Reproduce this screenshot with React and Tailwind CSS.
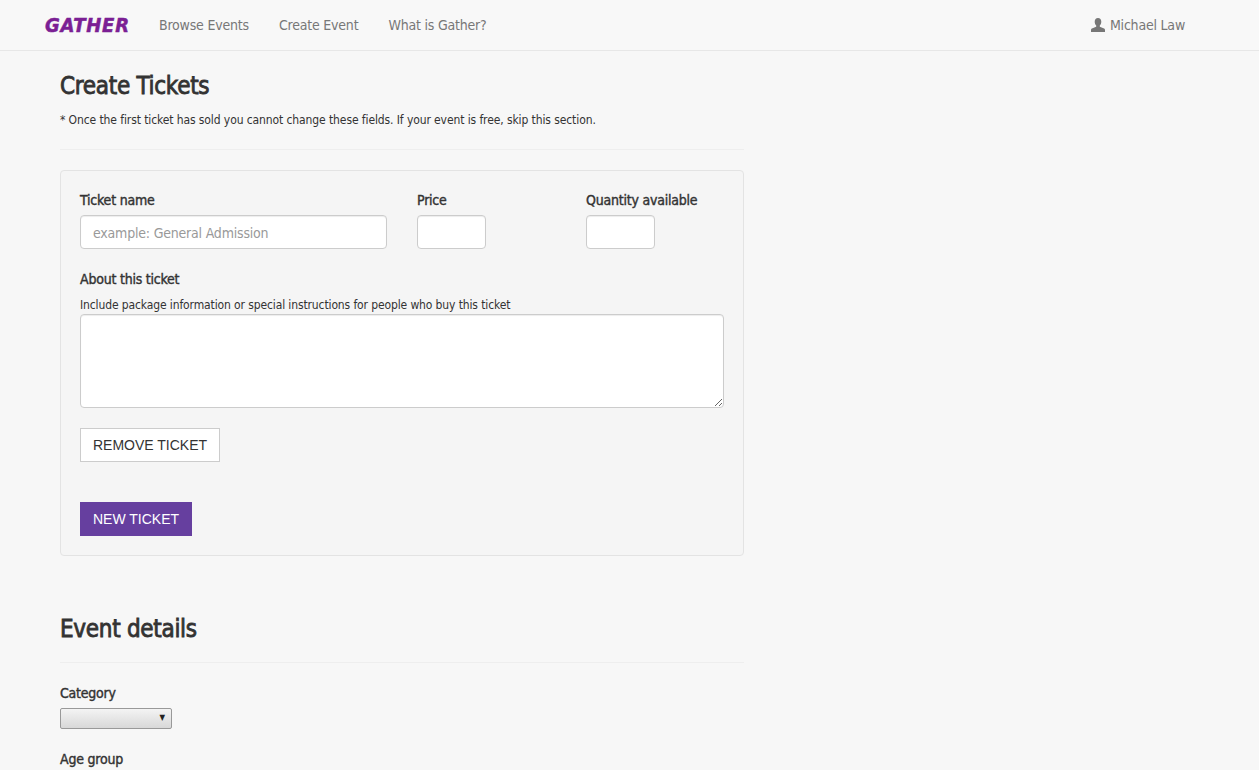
const body = "font-['DejaVu_Sans_Condensed','DejaVu_Sans',sans-serif] [font-stretch:condensed]"
const labelClass = 'block text-sm text-[#333] tracking-[-0.22px] [-webkit-text-stroke:0.4px_#333] leading-5'
const inputClass = 'h-[34px] bg-white border border-[#ccc] rounded-[4px] shadow-[inset_0_1px_1px_rgba(0,0,0,0.075)] outline-none'
const headingClass = 'text-2xl leading-[30px] text-[#333] tracking-[-0.3px] [-webkit-text-stroke:0.8px_#333]'

function Logo() {
  return (
    <span className="w-[85px] text-[20px] font-bold italic leading-none tracking-[0.75px] text-[#7b1f94] [-webkit-text-stroke:0.5px_#7b1f94]">GATHER</span>
  )
}

function UserGlyph() {
  return (
    <svg width="14" height="14" viewBox="0 0 14 14" fill="#777">
      <path d="M7 0C4.9 0 3.7 1.6 3.7 3.7c0 1.5.6 3 1.500 3.800v1.300L.9 10.600C.3 10.900 0 11.300 0 12v2h14v-2c0-.7-.3-1.100-.9-1.400L8.800 8.800V7.500c.9-.8 1.500-2.300 1.500-3.800C10.300 1.600 9.100 0 7 0z" />
    </svg>
  )
}

export default function App() {
  return (
    <div className={`h-[770px] overflow-hidden bg-[#f7f7f7] text-[#333] ${body}`}>
      {/* Navbar */}
      <nav className="h-[51px] bg-[#f8f8f8] border-b border-[#e7e7e7] flex items-center justify-between pl-[45px] pr-[74px]">
        <div className="flex items-center">
          <Logo />
          <div className="flex items-center gap-[30px] ml-[29px] text-sm text-[#777] tracking-[-0.2px]">
            <a>Browse Events</a>
            <a>Create Event</a>
            <a>What is Gather?</a>
          </div>
        </div>
        <div className="flex items-center gap-[5px] text-sm text-[#777] tracking-[-0.2px]">
          <UserGlyph />
          <span>Michael Law</span>
        </div>
      </nav>

      <main className="w-[684px] ml-[60px]">
        <h1 className={`mt-5 ${headingClass}`}>Create Tickets</h1>
        <p className="mt-[11px] text-xs leading-[17px] tracking-[-0.1px] text-[#333]">
          * Once the first ticket has sold you cannot change these fields. If your event is free, skip this section.
        </p>
        <div className="mt-[20px] border-t border-[#eee]" />

        <section className="mt-5 h-[386px] bg-[#f5f5f5] border border-[#e3e3e3] rounded-[4px] px-[19px] pt-[19px]">
          <div className="flex">
            <div className="w-[337px]">
              <label className={labelClass}>Ticket name</label>
              <input className={`${inputClass} w-[307px] mt-[5px] px-3 pt-[2px] text-sm tracking-[-0.2px] placeholder:text-[#999]`} placeholder="example: General Admission" />
            </div>
            <div className="w-[169px]">
              <label className={labelClass}>Price</label>
              <input className={`${inputClass} w-[69px] mt-[5px] block`} />
            </div>
            <div>
              <label className={labelClass}>Quantity available</label>
              <input className={`${inputClass} w-[69px] mt-[5px] block`} />
            </div>
          </div>

          <label className={`${labelClass} mt-5`}>About this ticket</label>
          <p className="mt-[8px] text-xs leading-[17px] tracking-[-0.12px]">Include package information or special instructions for people who buy this ticket</p>
          <textarea className={`${inputClass} block w-[644px] h-[94px]`} />

          <button className="block mt-5 h-[34px] px-3 bg-white border border-[#ccc] font-['Liberation_Sans',sans-serif] text-sm text-[#333]">REMOVE TICKET</button>
          <button className="block mt-10 h-[34px] px-[13px] bg-[#663f9f] font-['Liberation_Sans',sans-serif] text-sm text-white">NEW TICKET</button>
        </section>

        <h2 className={`mt-[58px] ${headingClass}`}>Event details</h2>
        <div className="mt-[18px] border-t border-[#eee]" />
        <label className={`${labelClass} mt-5`}>Category</label>
        <div className="relative w-[112px] h-[21px] mt-[5px] border border-[#999] rounded-[2px] bg-gradient-to-b from-[#f4f4f4] to-[#d8d8d8]">
          <span className="absolute right-[6px] top-0 text-[8px] leading-[17px] text-[#222]">▼</span>
        </div>
        <label className={`${labelClass} mt-5`}>Age group</label>
      </main>
    </div>
  )
}
